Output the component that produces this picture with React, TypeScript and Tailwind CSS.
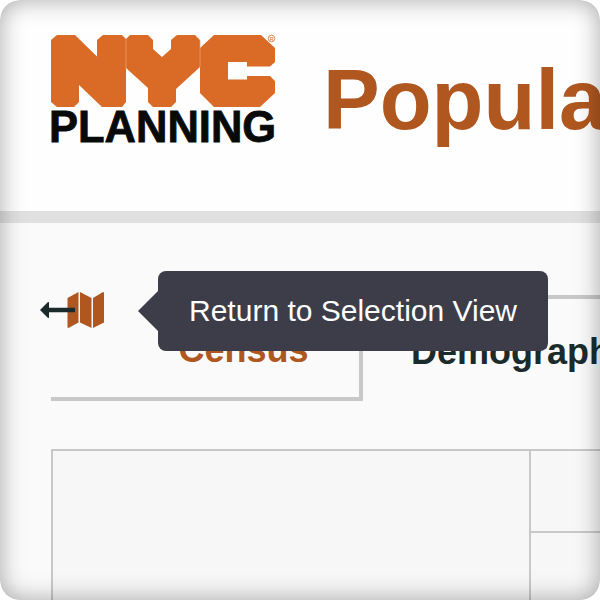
function Logo() {
  return (
    <a href="#home" aria-label="NYC Planning home" className="block w-56 shrink-0">
      <svg viewBox="0 0 224 108" className="block h-[108px] w-full overflow-visible" aria-hidden="true">
        <g fill="#da6b27">
          <path d="M6 0H24L46 21.5V5L52 0H71L75 4V67L71 72H51L28 50V67L23 72H6L0 67V5Z" />
          <path d="M75 4L79 0H97L102 5V14L111 22L120 14V5L126 0H144L149 5V32L125 54V67L120 72H102L97 67V53L75 33Z" />
          <path d="M149 13L163 0H210L224 13V27L219 31.5H196V27H177V44.5H196V41H219L224 46V58L209 72H163L149 58Z" />
        </g>
        <path d="M75 4V34M149 5V32" stroke="#eda574" strokeWidth="0.7" />
        <circle cx="220.5" cy="3.5" r="3.3" fill="none" stroke="#df8550" strokeWidth="0.9" />
        <text x="218.5" y="5.5" fill="#da6b27" fontSize="6" fontFamily="Liberation Sans, Arial, sans-serif">R</text>
        <text x="-2" y="107" fill="#080a0a" stroke="#080a0a" strokeWidth="0.8" fontSize="43.5" fontWeight="700" fontFamily="Liberation Sans, Arial, sans-serif">PLANNING</text>
      </svg>
    </a>
  );
}

function ReturnIcon() {
  return (
    <svg viewBox="0 0 64 38" className="block h-[38px] w-16" aria-hidden="true">
      <g fill="#b0571f">
        <path d="M27.5 6L38.5 0V30.5L28.5 36Q27.5 36 27.5 35Z" />
        <path d="M40 0L51.5 6V36L40 30.5Z" />
        <path d="M53 6L63 0Q64 0 64 1V30.5L53 36Z" />
      </g>
      <path d="M0 18L8 10Q9 9.5 9 11V15.7H35V20.3H9V25Q9 26.5 8 26Z" fill="#1b2b2b" />
    </svg>
  );
}

export default function App() {
  return (
    <div className="relative h-screen overflow-hidden rounded-[20px] bg-[#fafafa] font-['Liberation_Sans',Arial,sans-serif]">
      <header className="flex items-start gap-12 border-b-12 border-[#e0e0e0] bg-[#fefefe] pt-[35px] pb-17 pl-[51px]">
        <Logo />
        <h1 className="pt-[22px] text-[85px] leading-[86px] font-bold whitespace-nowrap text-[#b0571f]">
          Popula
        </h1>
      </header>

      <main className="pt-18 pl-[51px]">
        <nav className="flex h-[106px]" aria-label="Profile sections">
          <div className="relative w-[73px] shrink-0 border-b-4 border-[#c8c8c8]">
            <button type="button" aria-describedby="return-tip" aria-label="Return" className="-mt-[3px] -ml-[11px] block">
              <ReturnIcon />
            </button>
            <div
              id="return-tip"
              role="tooltip"
              className="absolute -top-6 left-[107px] z-10 flex h-20 w-[390px] items-center justify-center rounded-lg bg-[#3d3c49] text-3xl whitespace-nowrap text-white"
            >
              <svg viewBox="0 0 20 40" className="absolute top-5 right-full h-10 w-5" aria-hidden="true">
                <path d="M20 0V40L0 20Z" fill="#3d3c49" />
              </svg>
              Return to Selection View
            </div>
          </div>
          <a
            href="#census"
            className="flex w-[239px] shrink-0 items-center justify-center border-r-4 border-b-4 border-[#c8c8c8] pt-2 pl-1 text-4xl font-bold text-[#b0571f]"
          >
            Census
          </a>
          <a
            href="#demographic"
            className="flex grow items-center border-t-4 border-[#c8c8c8] pt-1 pl-12 text-4xl font-bold whitespace-nowrap text-[#1b2b2b]"
          >
            Demograph
          </a>
        </nav>

        <table className="mt-12 w-full table-fixed border-collapse bg-[#f7f7f7]" aria-label="Profile">
          <colgroup>
            <col className="w-[478px]" />
            <col />
          </colgroup>
          <tbody>
            <tr className="h-[82px]">
              <td rowSpan={2} className="border-2 border-[#c8c8c8]" />
              <td className="border-2 border-r-0 border-[#c8c8c8]" />
            </tr>
            <tr className="h-[120px]">
              <td className="border-2 border-r-0 border-[#c8c8c8]" />
            </tr>
          </tbody>
        </table>
      </main>

      <div className="pointer-events-none absolute inset-0 z-20 rounded-[20px] shadow-[inset_0_0_24px_rgba(0,0,0,0.34)]" />
    </div>
  );
}
